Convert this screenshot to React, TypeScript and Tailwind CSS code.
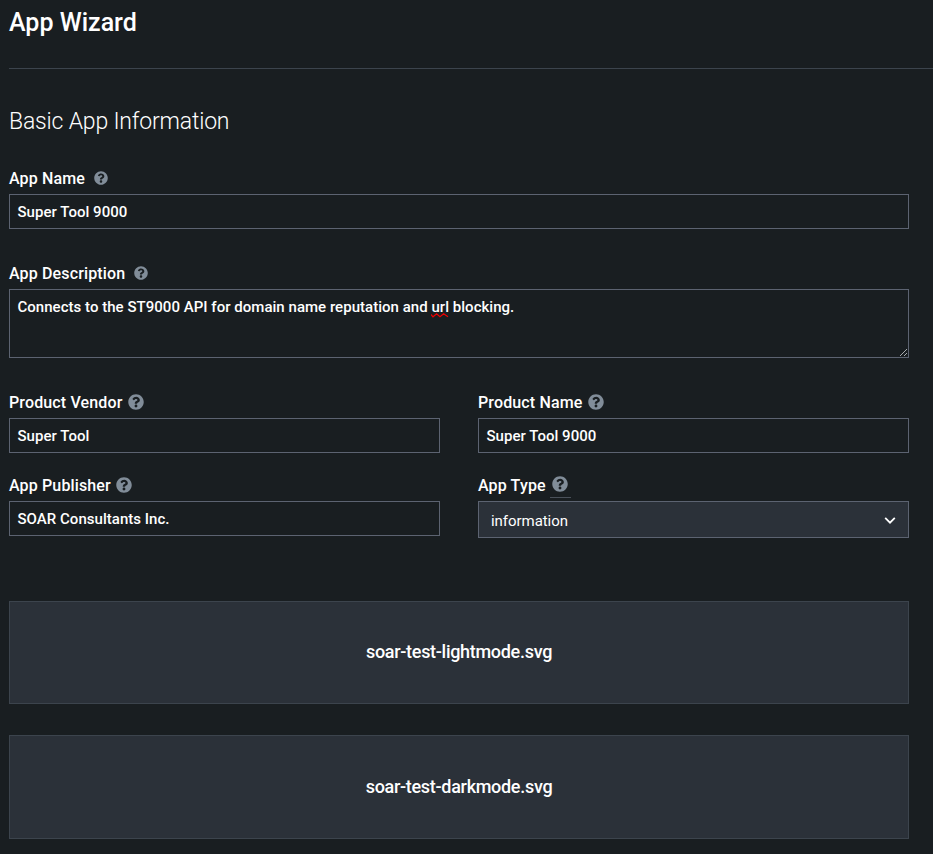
import type { ReactNode } from 'react';
import { FaQuestionCircle } from 'react-icons/fa';

const fieldBox = 'flex h-[35px] items-center border border-[#5c6371] px-[7.5px] text-[15px] font-medium leading-5 tracking-[0.03px] text-white';

function Label({ text, gap, small, underlined }: { text: string; gap: string; small?: boolean; underlined?: boolean }) {
  return (
    <div className="flex h-6 items-center text-base font-medium leading-6 tracking-[0.14px] text-white">
      <span className="whitespace-nowrap pt-[2px]">{text}</span>
      <span className={`flex items-center ${gap} ${underlined ? 'h-[26px] border-b border-[#4a515a] pl-[2px] pr-[3px] pb-px' : ''}`}>
        <FaQuestionCircle className={small ? 'size-[14px] text-[#818d99]' : 'size-4 text-[#818d99]'} />
      </span>
    </div>
  );
}

function Field({ label, gap, value }: { label: string; gap: string; value: string }) {
  return (
    <div>
      <Label text={label} gap={gap} />
      <div className={`mt-1 ${fieldBox}`}>{value}</div>
    </div>
  );
}

function DropBox({ className, children }: { className: string; children: ReactNode }) {
  return (
    <div className={`flex items-center justify-center border border-[#3c444d] bg-[#2b3139] text-lg font-medium leading-6 tracking-[-0.3px] text-white ${className}`}>
      {children}
    </div>
  );
}

export default function App() {
  return (
    <div className="h-[854px] w-[933px] overflow-hidden bg-[#191e21] pl-[9px] font-['Roboto','Liberation_Sans',sans-serif]">
      <header className="h-[69px] border-b border-[#3c444d] pt-[7px]">
        <h1 className="text-[25px] font-medium leading-8 text-white">App Wizard</h1>
      </header>
      <main className="w-[900px]">
        <h2 className="pt-[37px] text-[23px] font-light leading-8 tracking-[-0.18px] text-white">Basic App Information</h2>

        <section className="pt-7">
          <Label text="App Name" gap="ml-[9px]" small />
          <div className={`mt-1 ${fieldBox}`}>Super Tool 9000</div>
        </section>

        <section className="pt-8">
          <Label text="App Description" gap="ml-[9px]" small />
          <div className="mt-1 flex h-[69px] items-end justify-between border border-[#5c6371] pl-[7.5px] text-[15px] font-medium leading-5 tracking-[0.03px] text-white">
            <p className="self-start pt-[7px]">
              Connects to the ST9000 API for domain name reputation and{' '}
              <span className="relative inline-block">
                url
                <svg className="absolute left-0 top-[16px] h-[5px] w-[18px]" viewBox="0 0 18 5" fill="none" stroke="#f00000" strokeWidth="1.2">
                  <path d="M0 1.5 2 3.800 5.600.8 9 3.800 12.600.8 17 3.800" />
                </svg>
              </span>{' '}
              blocking.
            </p>
            <svg className="size-[10px] shrink-0" viewBox="0 0 10 10" stroke="#b8bbbe" strokeWidth="0.9">
              <path d="M2 9 9 2M6 9 9 6" />
            </svg>
          </div>
        </section>

        <section className="grid grid-cols-2 gap-x-[38px] gap-y-5 pt-8">
          <Field label="Product Vendor" gap="ml-[5px]" value="Super Tool" />
          <Field label="Product Name" gap="ml-[5.5px]" value="Super Tool 9000" />
          <Field label="App Publisher" gap="ml-[5px]" value="SOAR Consultants Inc." />
          <div>
            <Label text="App Type" gap="ml-1" underlined />
            <div className="mt-1 flex h-[37px] items-center justify-between border border-[#5c6371] bg-[#2b3139] pl-3 pr-[12px] text-[15px] leading-5 text-white">
              <span className="pt-[2px] tracking-[-0.05px]">information</span>
              <svg className="mt-px h-[7px] w-3" viewBox="0 0 12 7" fill="none" stroke="currentColor" strokeWidth="1.8">
                <path d="m1.2.9 4.8 4.8L10.800.9" />
              </svg>
            </div>
          </div>
        </section>

        <DropBox className="mt-[63px] h-[103px] pb-[2px]">soar-test-lightmode.svg</DropBox>
        <DropBox className="mt-[31px] h-[104px]">soar-test-darkmode.svg</DropBox>
      </main>
    </div>
  );
}
